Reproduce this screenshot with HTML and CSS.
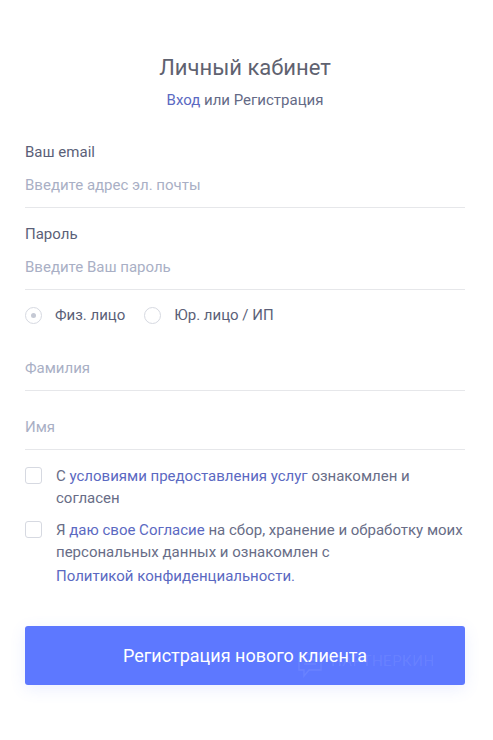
FILE: index.html
```html
<!DOCTYPE html>
<html lang="ru">
<head>
    <meta charset="UTF-8">
    <meta name="viewport" content="width=device-width, initial-scale=1.0">
    <title>Личный кабинет</title>
    <link rel="stylesheet" href="styles.css">
</head>
<body>
    <div class="cabinet">
        <h1 class="title">Личный кабинет</h1>
        <p class="switch"><a href="#">Вход</a> или Регистрация</p>

        <form class="reg-form">
            <div class="field">
                <label class="field-label" for="email">Ваш email</label>
                <input class="field-input" type="email" id="email" placeholder="Введите адрес эл. почты">
            </div>

            <div class="field field-password">
                <label class="field-label" for="password">Пароль</label>
                <input class="field-input" type="password" id="password" placeholder="Введите Ваш пароль">
            </div>

            <div class="radios">
                <label class="radio">
                    <span class="radio-circle checked"></span>
                    Физ. лицо
                </label>
                <label class="radio">
                    <span class="radio-circle"></span>
                    Юр. лицо / ИП
                </label>
            </div>

            <div class="field field-surname">
                <input class="field-input" type="text" placeholder="Фамилия">
            </div>

            <div class="field field-name">
                <input class="field-input" type="text" placeholder="Имя">
            </div>

            <label class="agree">
                <span class="box"></span>
                <span class="agree-text">С <a href="#">условиями предоставления услуг</a> ознакомлен и согласен</span>
            </label>

            <label class="agree agree-second">
                <span class="box"></span>
                <span class="agree-text">Я <a href="#">даю свое Согласие</a> на сбор, хранение и обработку моих персональных данных и ознакомлен с <a class="policy" href="#">Политикой конфиденциальности.</a></span>
            </label>

            <button class="submit" type="submit">
                Регистрация нового клиента
                <span class="watermark">
                    <svg width="26" height="30" viewBox="0 0 26 30" fill="none" stroke="currentColor" stroke-width="1.4">
                        <path d="M2 2h22v16H12l-5 6v-6H2z"/>
                        <path d="M7 8h5M15 8h4M7 12h12"/>
                    </svg>
                    ПАРТНЕРКИН
                </span>
            </button>
        </form>
    </div>
</body>
</html>
```

FILE: styles.css
```css
body {
    margin: 0;
    background: #fff;
    font-family: Roboto, "Liberation Sans", sans-serif;
}

.cabinet {
    padding: 54px 28px 40px 25px;
}

.title {
    margin: 0;
    font-size: 22px;
    line-height: 28px;
    font-weight: 400;
    color: #5f6270;
    text-align: center;
}

.switch {
    margin: 8px 0 0;
    font-size: 15px;
    line-height: 20px;
    color: #646a86;
    text-align: center;
}

.switch a,
.agree-text a {
    color: #5b69c2;
    text-decoration: none;
}

.reg-form {
    margin-top: 32px;
}

.field-label {
    display: block;
    font-size: 15px;
    line-height: 20px;
    color: #5b5f78;
}

.field-input {
    display: block;
    width: 100%;
    box-sizing: border-box;
    padding: 13px 0 12px;
    border: none;
    border-bottom: 1px solid #e6e7ea;
    font-family: inherit;
    font-size: 15px;
    line-height: 20px;
    color: #5b5f78;
    outline: none;
    background: transparent;
}

.field-input::placeholder {
    color: #a9afc5;
}

.field-password {
    margin-top: 16px;
}

.radios {
    display: flex;
    align-items: center;
    gap: 19px;
    margin-top: 15px;
}

.radio {
    display: flex;
    align-items: center;
    gap: 13px;
    font-size: 15px;
    line-height: 20px;
    color: #5b5f78;
}

.radio-circle {
    width: 15px;
    height: 15px;
    border: 1px solid #d6d9e1;
    border-radius: 50%;
    position: relative;
}

.radio-circle.checked::after {
    content: "";
    position: absolute;
    left: 5px;
    top: 5px;
    width: 5px;
    height: 5px;
    border-radius: 50%;
    background: #c5c9d4;
}

.field-surname {
    margin-top: 20px;
}

.field-name {
    margin-top: 13px;
}

.agree {
    display: flex;
    align-items: flex-start;
    gap: 14px;
    margin-top: 15px;
}

.agree-second {
    margin-top: 10px;
}

.box {
    flex: none;
    width: 15px;
    height: 15px;
    margin-top: 2px;
    border: 1px solid #d6d9e1;
    border-radius: 3px;
}

.agree-text {
    font-size: 15px;
    line-height: 22px;
    color: #686d87;
}

.agree-text .policy {
    display: block;
    margin-top: 2px;
}

.submit {
    position: relative;
    display: block;
    width: 100%;
    height: 59px;
    margin-top: 39px;
    border: none;
    border-radius: 3px;
    background: #5d78ff;
    color: #fff;
    font-family: inherit;
    font-size: 18px;
    cursor: pointer;
    box-shadow: 0 4px 16px rgba(93, 120, 255, 0.12);
}

.watermark {
    position: absolute;
    left: 272px;
    top: 26px;
    display: flex;
    align-items: flex-start;
    gap: 8px;
    font-size: 15px;
    letter-spacing: 0.5px;
    color: rgba(255, 255, 255, 0.08);
    pointer-events: none;
}
```
